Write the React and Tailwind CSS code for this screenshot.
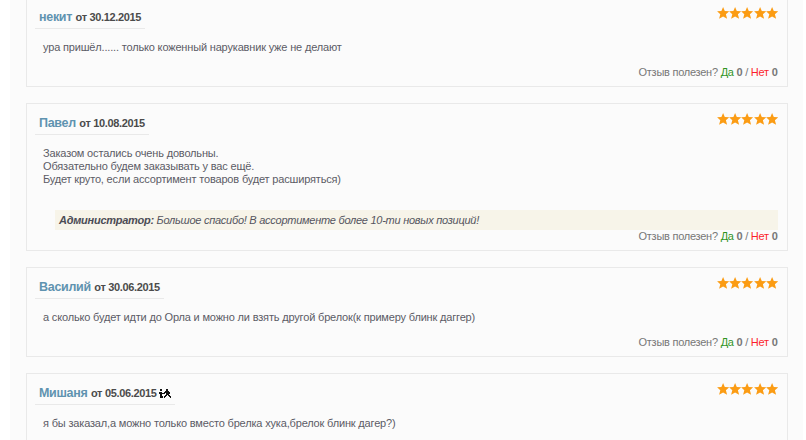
import React from "react";

const reviews = [
  {
    name: "некит",
    date: "30.12.2015",
    lines: ["ура пришёл...... только коженный нарукавник уже не делают"],
    votes: true,
  },
  {
    name: "Павел",
    date: "10.08.2015",
    lines: [
      "Заказом остались очень довольны.",
      "Обязательно будем заказывать у вас ещё.",
      "Будет круто, если ассортимент товаров будет расширяться)",
    ],
    answer: "Большое спасибо! В ассортименте более 10-ти новых позиций!",
    votes: true,
  },
  {
    name: "Василий",
    date: "30.06.2015",
    lines: ["а сколько будет идти до Орла и можно ли взять другой брелок(к примеру блинк даггер)"],
    votes: true,
  },
  {
    name: "Мишаня",
    date: "05.06.2015",
    badge: true,
    lines: ["я бы заказал,а можно только вместо брелка хука,брелок блинк дагер?)"],
  },
];

const Stars = () => (
  <div className="flex pt-[9px] pr-[9px]">
    {[1, 2, 3, 4, 5].map((n) => (
      <svg key={n} className="h-3 w-[12.2px]" viewBox="0 0 12 12" fill="#fb9c14">
        <path d="M6 0 7.7 4 12 4.3 8.8 7.2 10 11.8 6 9.4 2 11.8 3.2 7.2 0 4.3 4.3 4Z" />
      </svg>
    ))}
  </div>
);

// Small pixel emoji after the date
const Runner = () => (
  <svg className="mb-[2px] ml-[2px] h-[10px] w-[12px] self-center" viewBox="0 0 12 10" fill="#111">
    <path d="M1 0h2v2H1zM0 3h3v1h2v1H3v2h1v2H1V5H0zM7 0h2v2h1v1h1v2h-1v1h1v1h1v2h-1V8h-1V7H9V6H8v1H7v1H6v1H5V7h1V6h1V4H6v1H5V3h1V2h1z" />
  </svg>
);

const Review = ({ review }) => (
  <div className="flex flex-col border border-[#e9e9e9]">
    <div className="flex items-start justify-between">
      <div className="ml-2 flex h-[31px] items-baseline border-b border-[#e9e9e9] pt-[11px] pr-1 pl-1 leading-4 font-bold">
        <span className="text-[12.5px] tracking-[-0.3px] text-[#5f93b0]">{review.name}</span>
        <span className="ml-[3.5px] text-[11px] tracking-[-0.34px] whitespace-pre text-[#4b4b4b]">
          от {review.date}
        </span>
        {review.badge && <Runner />}
      </div>
      <Stars />
    </div>
    <div className="mt-3 ml-4 text-[11px] leading-[13px] tracking-[-0.17px] text-[#5b5b66]">
      {review.lines.map((line) => (
        <p key={line}>{line}</p>
      ))}
    </div>
    {review.answer ? (
      <div className="mt-6 mr-[9px] ml-7 h-5 bg-[#f7f4e9] pl-1 text-[11px] leading-5 tracking-[-0.26px] text-[#555560] italic">
        <b className="text-[#4c4c55]">Администратор:</b> <span>{review.answer}</span>
      </div>
    ) : (
      <div className="h-3" />
    )}
    {review.votes ? (
      <div className="h-5 pr-[9.5px] text-right text-[11px] leading-[13px] tracking-[-0.25px] text-[#777]">
        Отзыв полезен? <span className="text-[#2f941f]">Да</span> <b>0</b> /{" "}
        <span className="text-[#fb1e2c]">Нет</span> <b>0</b>
      </div>
    ) : (
      <div className="h-5" />
    )}
  </div>
);

const App = () => {
  return (
    <div className="h-[440px] w-[806px] overflow-hidden bg-white font-['Liberation_Sans',Arial,sans-serif]">
      <div className="mr-[3px] ml-[10px] h-[440px] overflow-hidden bg-[#fbfbfb] pr-[15px] pl-4">
        <div className="-mt-[3px] flex flex-col gap-4">
          {reviews.map((review) => (
            <Review key={review.name} review={review} />
          ))}
        </div>
      </div>
    </div>
  );
};

export default App;
